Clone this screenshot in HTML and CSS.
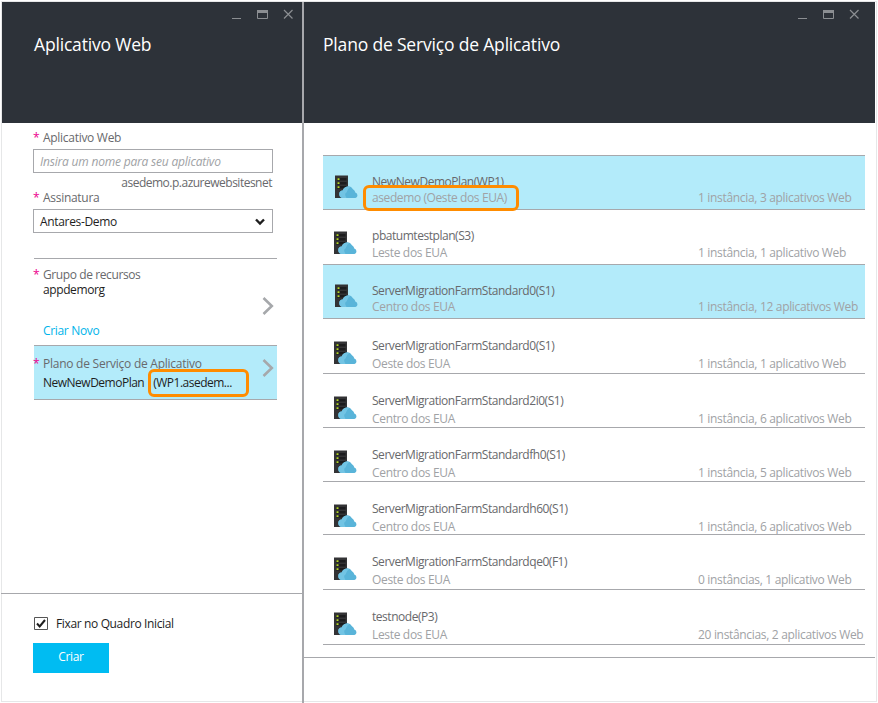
FILE: index.html
```html
<!DOCTYPE html>
<html lang="pt">
<head>
<meta charset="utf-8">
<title>Plano de Serviço de Aplicativo</title>
<link rel="stylesheet" href="styles.css">
</head>
<body>
<svg class="defs" width="0" height="0">
  <symbol id="controls" viewBox="0 0 64 12">
    <path d="M0 10.500h9" stroke="#8b8e92" fill="none"/>
    <path d="M25.500 2.500h10v8h-10z" stroke="#8b8e92" fill="none"/>
    <path d="M25 2h11v3H25z" fill="#8b8e92"/>
    <path d="M52 2l8.500 8.500M60.500 2L52 10.500" stroke="#8b8e92" stroke-width="1.200" fill="none"/>
  </symbol>
  <symbol id="server" viewBox="0 0 23 24">
    <path d="M0 .5h13v22.500H0z" fill="#333335"/>
    <path d="M2 3h9.500v2.500H2zM2 7h9.500v2.500H2zM2 11h9.500v2.500H2z" fill="#1c1c1e"/>
    <path d="M2.500 3.300h2v1.800h-2zM2.500 7.300h2v1.800h-2zM2.500 11.300h2v1.800h-2z" fill="#b5d629"/>
    <path d="M8.300 23a3.700 3.700 0 0 1-.6-7.400A5.600 5.600 0 0 1 18 14.200a4.300 4.300 0 0 1 2.300 3.400A2.800 2.800 0 0 1 20.500 23z" fill="#59b4d9"/>
    <path d="M8.300 23a3.700 3.700 0 0 1-.6-7.400A5.600 5.600 0 0 1 15.500 12C12 13.500 13 17 10.500 18.200 9.500 20 11 21.500 11.500 23z" fill="#72c4e4"/>
  </symbol>
  <symbol id="chevron" viewBox="0 0 12 18"><path d="M1.500 1l8.300 8-8.300 8" fill="none" stroke="#a6a8ab" stroke-width="2.600"/></symbol>
</svg>
<div class="window">
  <section class="blade create">
    <header class="head"><svg class="controls"><use href="#controls"/></svg><h1>Aplicativo Web</h1></header>
    <div class="form">
      <label class="label first"><i>*</i><span>Aplicativo Web</span></label>
      <div class="field hint"><span>Insira um nome para seu aplicativo</span></div>
      <p class="suffix">asedemo.p.azurewebsitesnet</p>
      <label class="label"><i>*</i><span>Assinatura</span></label>
      <div class="field select"><span>Antares-Demo</span><svg width="10" height="8" viewBox="0 0 10 8"><path d="M1 1.500l4 4 4-4" fill="none" stroke="#1e1e1e" stroke-width="2.400"/></svg></div>
      <div class="picker group">
        <div class="label"><i>*</i><span>Grupo de recursos</span></div>
        <p class="value"><span class="rg">appdemorg</span></p>
        <a class="new"><span>Criar Novo</span></a>
        <svg class="chevron"><use href="#chevron"/></svg>
      </div>
      <div class="picker plan">
        <div class="label"><i>*</i><span>Plano de Serviço de Aplicativo</span></div>
        <p class="value"><span class="plan-name">NewNewDemoPlan</span><span class="plan-id">(WP1.asedem...</span></p>
        <svg class="chevron"><use href="#chevron"/></svg>
        <div class="callout"></div>
      </div>
    </div>
    <footer class="foot">
      <div class="pin"><svg width="14" height="13" viewBox="0 0 14 13"><path d="M.5.5h13v12H.5z" fill="#fff" stroke="#555"/><path d="M3 6.500l2.700 3L11 3" fill="none" stroke="#1e1e1e" stroke-width="2"/></svg><span>Fixar no Quadro Inicial</span></div>
      <button class="submit"><span>Criar</span></button>
    </footer>
  </section>
  <section class="blade plans">
    <header class="head"><svg class="controls"><use href="#controls"/></svg><h1>Plano de Serviço de Aplicativo</h1></header>
    <ul class="list">
      <li class="row on first"><svg class="server"><use href="#server"/></svg><div class="info"><b>NewNewDemoPlan(WP1)</b><em>asedemo (Oeste dos EUA)</em></div><span class="usage">1 instância, 3 aplicativos Web</span><div class="callout"></div></li>
      <li class="row second"><svg class="server"><use href="#server"/></svg><div class="info"><b>pbatumtestplan(S3)</b><em>Leste dos EUA</em></div><span class="usage">1 instância, 1 aplicativo Web</span></li>
      <li class="row on"><svg class="server"><use href="#server"/></svg><div class="info"><b>ServerMigrationFarmStandard0(S1)</b><em>Centro dos EUA</em></div><span class="usage">1 instância, 12 aplicativos Web</span></li>
      <li class="row tall"><svg class="server"><use href="#server"/></svg><div class="info"><b>ServerMigrationFarmStandard0(S1)</b><em>Oeste dos EUA</em></div><span class="usage">1 instância, 1 aplicativo Web</span></li>
      <li class="row"><svg class="server"><use href="#server"/></svg><div class="info"><b>ServerMigrationFarmStandard2i0(S1)</b><em>Centro dos EUA</em></div><span class="usage">1 instância, 6 aplicativos Web</span></li>
      <li class="row"><svg class="server"><use href="#server"/></svg><div class="info"><b>ServerMigrationFarmStandardfh0(S1)</b><em>Centro dos EUA</em></div><span class="usage">1 instância, 5 aplicativos Web</span></li>
      <li class="row short"><svg class="server"><use href="#server"/></svg><div class="info"><b>ServerMigrationFarmStandardh60(S1)</b><em>Centro dos EUA</em></div><span class="usage">1 instância, 6 aplicativos Web</span></li>
      <li class="row tall"><svg class="server"><use href="#server"/></svg><div class="info"><b>ServerMigrationFarmStandardqe0(F1)</b><em>Oeste dos EUA</em></div><span class="usage">0 instâncias, 1 aplicativo Web</span></li>
      <li class="row tall"><svg class="server"><use href="#server"/></svg><div class="info"><b>testnode(P3)</b><em>Leste dos EUA</em></div><span class="usage">20 instâncias, 2 aplicativos Web</span></li>
    </ul>
    <div class="base"></div>
  </section>
</div>
</body>
</html>
```
FILE: styles.css
```css
* { box-sizing: border-box; margin: 0; padding: 0; }
body { width: 878px; height: 703px; overflow: hidden; background: #fff; font: 12px/16px "Open Sans", "Noto Sans", sans-serif; letter-spacing: -.33px; color: #1e1e1e; white-space: nowrap; }
i, em, b { font-style: normal; font-weight: 400; }
.defs { position: absolute; }
.window { display: flex; width: 876px; height: 701px; margin: 1px 0 0 1px; border: 1px solid #e6e7e8; }
.blade { display: flex; flex-direction: column; }
.create { width: 302px; height: 701px; border-right: 2px solid #a7a8ac; }
.plans { width: 572px; }
.head { position: relative; flex: none; height: 121px; padding: 30px 0 0 32px; background: #2d3239; color: #fff; }
.plans .head { width: 571px; padding-left: 19px; }
.head h1 { font-size: 17.500px; line-height: 24px; font-weight: 400; letter-spacing: -.18px; }
.controls { position: absolute; right: 6px; top: 6px; width: 64px; height: 12px; }
.plans .controls { right: 13px; }

.form { height: 470px; padding: 7px 25px 0 32px; }
.label { display: flex; color: #68696c; letter-spacing: -.29px; }
.label i { width: 10px; margin-left: -1px; color: #ec008c; }
.field { display: flex; align-items: center; width: 240px; height: 24px; margin-left: -1px; padding: 1px 6px 0; border: 1px solid #a7a8ac; }
.label + .field { margin-top: 3px; }
.hint { color: #a0a2a5; font-style: italic; letter-spacing: -.2px; }
.select { justify-content: space-between; padding-right: 7px; }
.suffix { width: 238px; padding-top: 2px; margin-bottom: -1px; text-align: right; color: #68696c; letter-spacing: -.5px; }
.picker { position: relative; border-bottom: 1px solid #a7a8ac; }
.value { padding-left: 9px; }
.group { height: 88px; margin-top: 25px; padding-top: 9px; border-top: 1px solid #a7a8ac; }
.group .label, .group .value { line-height: 14px; }
.group .label { letter-spacing: -.4px; }
.group .value { margin-top: 1px; letter-spacing: -.4px; }
.new { display: block; padding: 26px 0 0 9px; color: #00b4ea; }
.plan { height: 54px; padding-top: 10px; background: #b3ebfa; }
.plan .label { letter-spacing: -.25px; }
.plan .value { display: flex; gap: 9px; margin-top: 3px; letter-spacing: -.5px; }
.chevron { position: absolute; right: 3px; top: 38px; width: 12px; height: 18px; }
.plan .chevron { top: 13px; }
.callout { position: absolute; border: 3px solid #ff8c00; border-radius: 6px; }
.plan .callout { left: 114px; top: 23px; width: 101px; height: 28px; }

.foot { height: 110px; margin-left: -1px; padding: 22px 0 0 32px; border-top: 1px solid #a7a8ac; }
.pin { display: flex; align-items: center; gap: 8px; padding-left: 1px; letter-spacing: -.36px; }
.pin svg { margin-top: -1px; }
.submit { display: block; width: 76px; height: 30px; margin-top: 11px; padding-bottom: 2px; border: 0; background: #00bcf2; color: #fff; font: inherit; letter-spacing: inherit; }

.list { width: 542px; margin: 32px 0 0 19px; border-top: 1px solid #a7a8ac; list-style: none; }
.row { position: relative; display: flex; height: 54px; padding: 19px 0 0 11px; border-bottom: 1px solid #a7a8ac; }
.server { flex: none; width: 23px; height: 24px; margin-top: 3px; }
.info { width: 326px; margin-left: 15px; color: #68696c; }
.info b, .info em { display: block; }
.info b { letter-spacing: -.46px; }
.info em { margin-top: 2px; color: #a0a2a5; }
.usage { margin-top: 18px; color: #a0a2a5; letter-spacing: -.32px; }
.tall, .second { height: 55px; }
.short { height: 53px; }
.on { padding: 19px 0 0 12px; background: #b3ebfa; }
.on .server { margin-top: 0; }
.on .info { margin-left: 14px; }
.on .info b, .on .info em { line-height: 14px; }
.on .info em { margin-top: 2px; }
.on .usage { margin-top: 15px; }
.first .info em { letter-spacing: -.4px; }
.second { padding-top: 18px; }
.second .info em { margin-top: 1px; }
.second .usage { margin-top: 17px; }
.row .callout { left: 40px; top: 29px; width: 156px; height: 26px; }
.base { width: 571px; margin-top: 12px; border-top: 1px solid #a7a8ac; }
```
